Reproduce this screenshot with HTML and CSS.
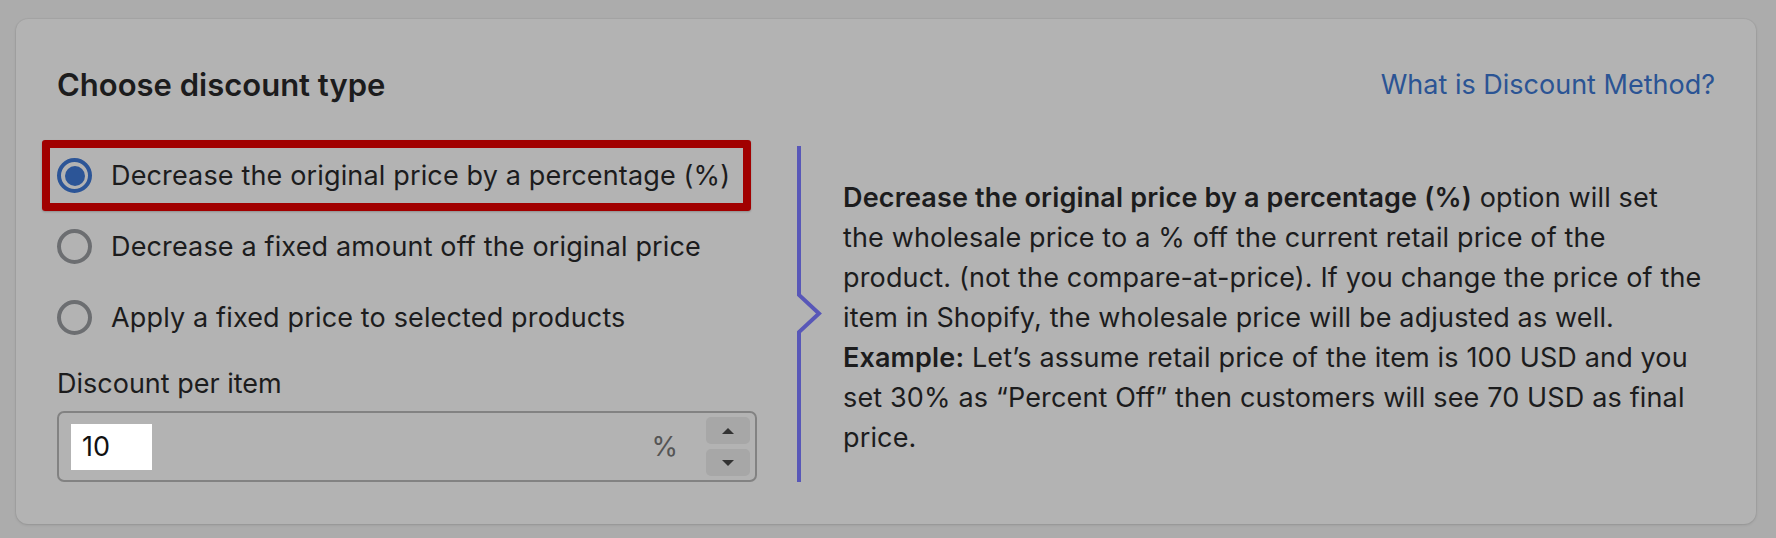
FILE: index.html
```html
<!DOCTYPE html>
<html>
	<head>
		<meta charset="utf-8">
		<title>Choose discount type</title>
		<link rel="stylesheet" href="styles.css">
	</head>
	<body>
		<!-- 折扣类型卡片 -->
		<div class="card">
			<div class="card-head">
				<h2 class="card-title">Choose discount type</h2>
				<a class="help-link" href="javascript:;">What is Discount Method?</a>
			</div>
			<div class="card-body">
				<!-- 左边：选项和输入框 -->
				<div class="left-col">
					<ul class="options">
						<li class="option option-active">
							<span class="radio radio-on"></span>
							<span class="option-text">Decrease the original price by a percentage (%)</span>
						</li>
						<li class="option">
							<span class="radio"></span>
							<span class="option-text">Decrease a fixed amount off the original price</span>
						</li>
						<li class="option">
							<span class="radio"></span>
							<span class="option-text">Apply a fixed price to selected products</span>
						</li>
					</ul>
					<div class="field-label">Discount per item</div>
					<div class="field">
						<span class="field-value">10</span>
						<span class="field-suffix">%</span>
						<div class="spinner">
							<a class="spin-btn" href="javascript:;"><span class="arrow-up"></span></a>
							<a class="spin-btn" href="javascript:;"><span class="arrow-down"></span></a>
						</div>
					</div>
				</div>
				<!-- 右边：说明文字 -->
				<div class="right-col">
					<svg class="pointer" width="26" height="44" viewBox="0 0 26 44">
						<rect x="0" y="0" width="8" height="44" fill="#b3b3b3"></rect>
						<polyline points="3,0 3,3 23,21.5 3,40 3,44" fill="none" stroke="#5857b8" stroke-width="4"></polyline>
					</svg>
					<p class="desc">
						<b>Decrease the original price by a percentage (%)</b> option will set<br>
						the wholesale price to a % off the current retail price of the<br>
						product. (not the compare-at-price). If you change the price of the<br>
						item in Shopify, the wholesale price will be adjusted as well.<br>
						<b>Example:</b> Let’s assume retail price of the item is 100 USD and you<br>
						set 30% as “Percent Off” then customers will see 70 USD as final<br>
						price.
					</p>
				</div>
			</div>
		</div>
	</body>
</html>
```

FILE: styles.css
```css
*{
	margin: 0;
	padding: 0;
	box-sizing: border-box;
}

body{
	background-color: #acacac;
	font-family: Inter, "Liberation Sans", sans-serif;
	color: #1c1c1d;
	padding: 19px 20px 15px 16px;
}

/* 卡片 */
.card{
	background-color: #b3b3b3;
	border-radius: 12px;
	box-shadow: 0 0 0 1px rgba(0,0,0,0.03), 0 1px 3px rgba(0,0,0,0.12);
	padding: 42px 41px 42px 41px;
}

.card-head{
	display: flex;
	justify-content: space-between;
	align-items: center;
	height: 46px;
}

.card-title{
	font-size: 31px;
	font-weight: 600;
}

.help-link{
	font-size: 27px;
	color: #2b5494;
	text-decoration: none;
}

.card-body{
	display: grid;
	grid-template-columns: 700px 1fr;
	column-gap: 40px;
	margin-top: 33px;
}

/* 选项列表 */
.options{
	list-style: none;
}

.option{
	display: flex;
	align-items: center;
	gap: 19px;
	height: 71px;
	font-size: 27px;
	letter-spacing: 0.15px;
	position: relative;
}

/* 引导高亮的红框 */
.option-active::before{
	content: "";
	position: absolute;
	left: -15px;
	right: 6px;
	top: 0;
	bottom: 0;
	border: 8px solid #a10000;
	border-radius: 3px;
	box-shadow: 0 1px 2px rgba(0,0,0,0.2);
}

.radio{
	width: 35px;
	height: 35px;
	border-radius: 50%;
	border: 4px solid #6c6e71;
	flex-shrink: 0;
	display: flex;
	align-items: center;
	justify-content: center;
}

.radio-on{
	border-color: #2c5597;
}

.radio-on::after{
	content: "";
	width: 20px;
	height: 20px;
	border-radius: 50%;
	background-color: #2c5597;
}

.field-label{
	font-size: 27px;
	height: 36px;
	line-height: 36px;
	margin-top: 13px;
}

/* 输入框 */
.field{
	margin-top: 9px;
	height: 71px;
	border: 2px solid #828282;
	border-radius: 7px;
	display: flex;
	align-items: center;
	padding: 0 5px 0 12px;
}

.field-value{
	background-color: #fff;
	width: 81px;
	height: 46px;
	line-height: 46px;
	padding-left: 11px;
	font-size: 27px;
	color: #111;
}

.field-suffix{
	margin-left: auto;
	font-size: 27px;
	color: #555;
	margin-right: 28px;
}

.spinner{
	display: flex;
	flex-direction: column;
	gap: 5px;
}

.spin-btn{
	width: 44px;
	height: 27px;
	border-radius: 5px;
	background-color: #a7a7a7;
	display: flex;
	align-items: center;
	justify-content: center;
}

.arrow-up{
	border-left: 6px solid transparent;
	border-right: 6px solid transparent;
	border-bottom: 6px solid #333;
}

.arrow-down{
	border-left: 6px solid transparent;
	border-right: 6px solid transparent;
	border-top: 6px solid #333;
}

/* 右边说明 */
.right-col{
	position: relative;
	border-left: 4px solid #5857b8;
	margin-top: 6px;
	display: flex;
	align-items: center;
	padding: 8px 0 0 42px;
}

.pointer{
	position: absolute;
	left: -5px;
	top: 50%;
	margin-top: -22px;
}

.desc{
	font-size: 27px;
	line-height: 40px;
	letter-spacing: 0.15px;
	white-space: nowrap;
}

.desc b{
	font-weight: 600;
}
```
